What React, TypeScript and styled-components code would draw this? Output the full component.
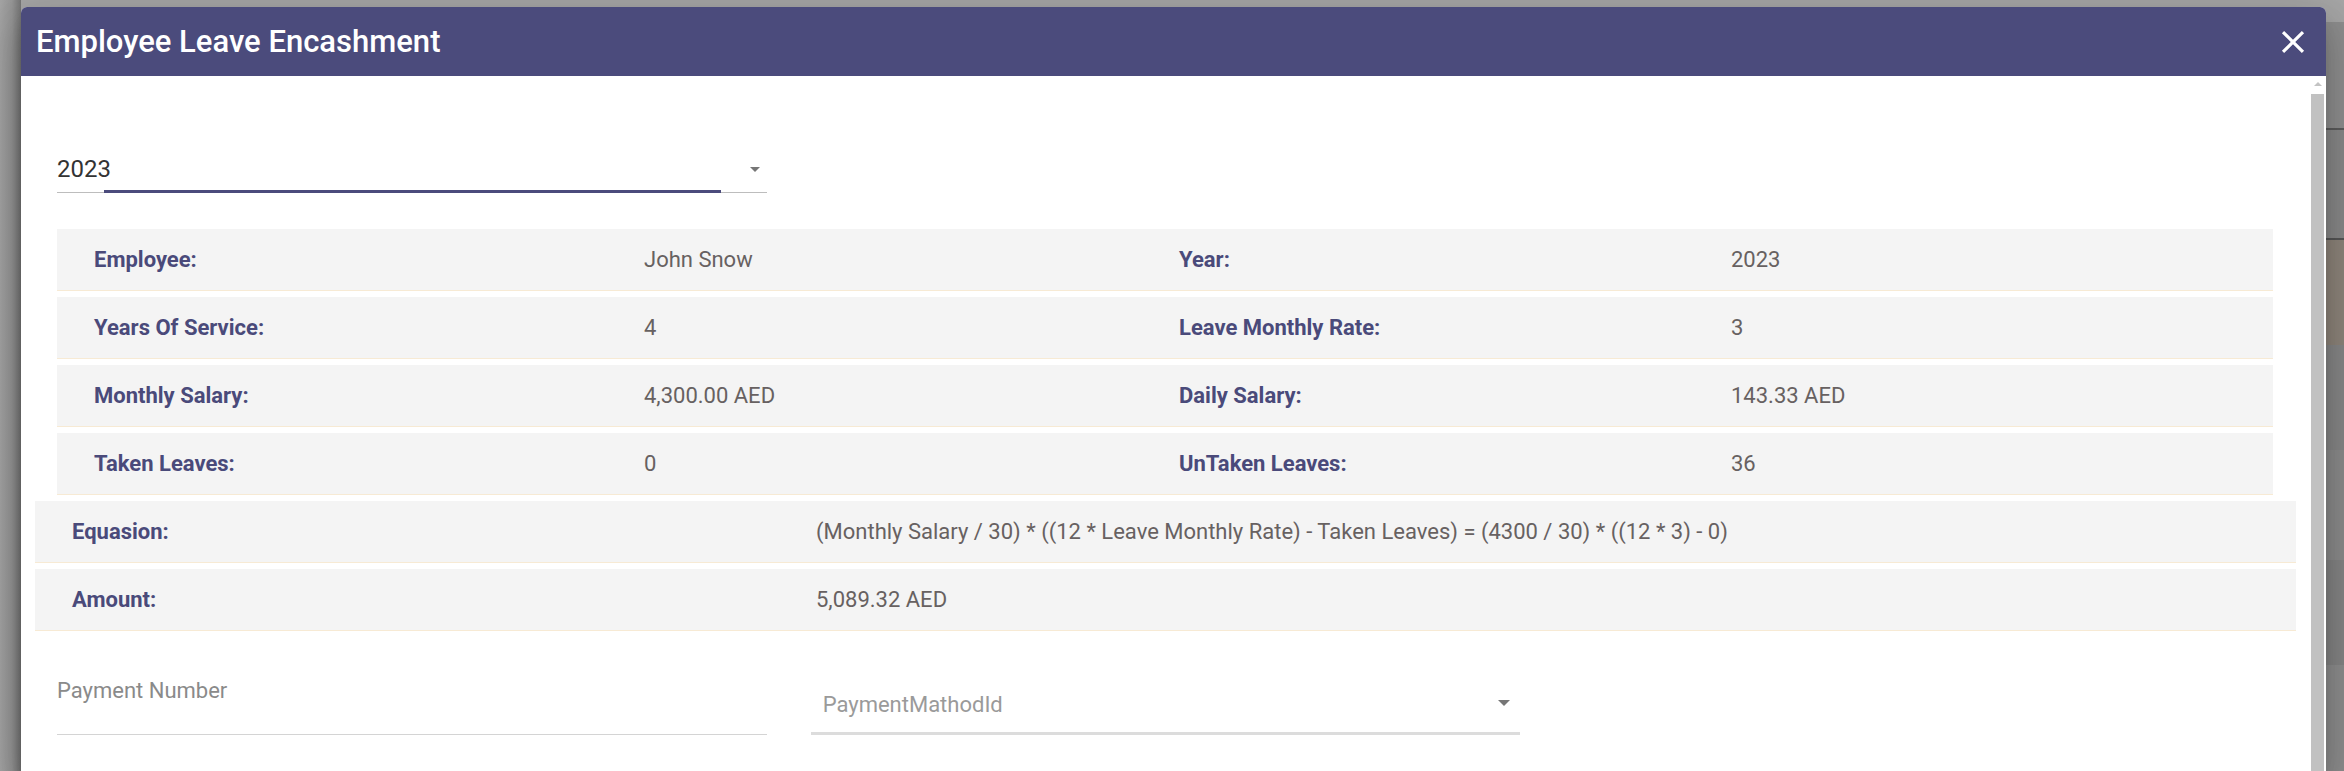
import React from "react";
import styled, { createGlobalStyle } from "styled-components";

const headerColor = "#4b4b7c";

const GlobalStyle = createGlobalStyle`
  html, body {
    margin: 0;
    padding: 0;
    height: 771px;
    overflow: hidden;
  }

  body {
    font-family: Roboto, "Liberation Sans", sans-serif;
    background:
      linear-gradient(to right, #a4a4a4 0px, #969696 12px, #767676 21px, transparent 21px),
      linear-gradient(
        to bottom,
        #a6a6a6 0px, #a6a6a6 22px,
        #8f8f8f 22px, #8f8f8f 128px,
        #5c5c5c 128px, #5c5c5c 130px,
        #898989 130px, #898989 238px,
        #565656 238px, #565656 240px,
        #8e857b 240px, #8e857b 345px,
        #878787 345px, #878787 450px,
        #8c8c8c 450px, #8c8c8c 560px,
        #858585 560px, #858585 665px,
        #8e8e8e 665px
      );
  }
`;

const Page = styled.div`
  padding: 7px 0 0 21px;
  height: 771px;
  box-sizing: border-box;
`;

const Dialog = styled.div`
  width: 2305px;
  height: 764px;
  display: flex;
  flex-direction: column;
  background: #fff;
  border-radius: 6px 6px 0 0;
  overflow: hidden;
  box-shadow: 0 11px 15px -7px rgba(0, 0, 0, 0.2), 0 24px 38px 3px rgba(0, 0, 0, 0.14),
    0 9px 46px 8px rgba(0, 0, 0, 0.12);
`;

const Header = styled.header`
  height: 69px;
  flex-shrink: 0;
  display: flex;
  align-items: center;
  justify-content: space-between;
  padding: 0 14px 0 15px;
  background: ${headerColor};
`;

const Title = styled.h2`
  margin: 0;
  font-size: 31px;
  font-weight: 500;
  color: #fff;
  letter-spacing: 0;
`;

const CloseButton = styled.button`
  border: 0;
  padding: 0;
  background: none;
  display: flex;
  cursor: pointer;
  color: #fff;
`;

const Body = styled.div`
  flex: 1;
  min-height: 0;
  display: flex;
`;

const Content = styled.div`
  flex: 1;
  padding: 0 15px 0 14px;
  overflow: hidden;
`;

const ScrollBar = styled.div`
  width: 13px;
  margin-right: 2px;
  display: flex;
  flex-direction: column;
  align-items: center;
`;

const ScrollArrow = styled.div`
  margin-top: 6px;
  height: 12px;
  display: flex;
  align-items: flex-start;
  justify-content: center;

  &::before {
    content: "";
    border-left: 4px solid transparent;
    border-right: 4px solid transparent;
    border-bottom: 4px solid #c3c3c3;
  }
`;

const ScrollThumb = styled.div`
  flex: 1;
  width: 13px;
  background: #c1c1c1;
`;

const FormRow = styled.div<{ $top: number }>`
  display: grid;
  grid-template-columns: repeat(3, 1fr);
  align-items: end;
  margin-top: ${(p) => p.$top}px;
`;

const FieldCell = styled.div`
  padding: 0 22px;
`;

const SelectBox = styled.div<{ $muted?: boolean }>`
  position: relative;
  padding: 0 0 ${(p) => (p.$muted ? 14 : 9)}px ${(p) => (p.$muted ? 12 : 0)}px;
  border-bottom: ${(p) => (p.$muted ? "3px solid #dcdcdc" : "1px solid #bdbdbd")};
  font-size: ${(p) => (p.$muted ? 22 : 24)}px;
  line-height: ${(p) => (p.$muted ? 26 : 28)}px;
  color: ${(p) => (p.$muted ? "#9a9a9a" : "#333")};
`;

const SelectArrow = styled.span<{ $right: number; $top: number; $size: number }>`
  position: absolute;
  right: ${(p) => p.$right}px;
  top: ${(p) => p.$top}px;
  border-left: ${(p) => p.$size}px solid transparent;
  border-right: ${(p) => p.$size}px solid transparent;
  border-top: ${(p) => p.$size}px solid #767676;
`;

const FocusBar = styled.span`
  position: absolute;
  left: 47px;
  right: 46px;
  bottom: -1px;
  height: 3px;
  background: ${headerColor};
`;

const TextField = styled.div`
  padding-bottom: 30px;
  border-bottom: 1px solid #d4d4d4;
`;

const FieldLabel = styled.label`
  display: block;
  font-size: 22px;
  line-height: 26px;
  color: #8a8a8a;
`;

const InfoBlock = styled.div`
  margin-top: 36px;
  padding: 0 23px 0 22px;
`;

const InfoRow = styled.div<{ $wide?: boolean }>`
  display: grid;
  grid-template-columns: ${(p) => (p.$wide ? "744px 1fr" : "550px 535px 552px 1fr")};
  align-items: center;
  height: 61px;
  padding-left: 37px;
  margin-bottom: 6px;
  background: #f4f4f4;
  border-bottom: 1px solid #f7ead4;
`;

const Label = styled.span`
  font-size: 22px;
  font-weight: 700;
  color: #4a4a7a;
`;

const Value = styled.span`
  font-size: 22px;
  color: #676161;
  white-space: nowrap;
`;

const details: [string, string, string, string][] = [
  ["Employee:", "John Snow", "Year:", "2023"],
  ["Years Of Service:", "4", "Leave Monthly Rate:", "3"],
  ["Monthly Salary:", "4,300.00 AED", "Daily Salary:", "143.33 AED"],
  ["Taken Leaves:", "0", "UnTaken Leaves:", "36"],
];

const CloseIcon = () => (
  <svg width="38" height="38" viewBox="0 0 24 24" fill="currentColor">
    <path d="M19 6.41L17.59 5 12 10.59 6.41 5 5 6.41 10.59 12 5 17.59 6.41 19 12 13.41 17.59 19 19 17.59 13.41 12z" />
  </svg>
);

export default function App() {
  return (
    <>
      <GlobalStyle />
      <Page>
        <Dialog>
          <Header>
            <Title>Employee Leave Encashment</Title>
            <CloseButton aria-label="close">
              <CloseIcon />
            </CloseButton>
          </Header>
          <Body>
            <Content>
              <FormRow $top={79}>
                <FieldCell>
                  <SelectBox>
                    2023
                    <SelectArrow $right={7} $top={12} $size={5} />
                    <FocusBar />
                  </SelectBox>
                </FieldCell>
              </FormRow>

              <InfoBlock>
                {details.map(([l1, v1, l2, v2]) => (
                  <InfoRow key={l1}>
                    <Label>{l1}</Label>
                    <Value>{v1}</Value>
                    <Label>{l2}</Label>
                    <Value>{v2}</Value>
                  </InfoRow>
                ))}
              </InfoBlock>

              <InfoRow $wide>
                <Label>Equasion:</Label>
                <Value>
                  (Monthly Salary / 30) * ((12 * Leave Monthly Rate) - Taken Leaves) = (4300 / 30) * ((12 * 3) - 0)
                </Value>
              </InfoRow>
              <InfoRow $wide>
                <Label>Amount:</Label>
                <Value>5,089.32 AED</Value>
              </InfoRow>

              <FormRow $top={47}>
                <FieldCell>
                  <TextField>
                    <FieldLabel>Payment Number</FieldLabel>
                  </TextField>
                </FieldCell>
                <FieldCell>
                  <SelectBox $muted>
                    PaymentMathodId
                    <SelectArrow $right={10} $top={8} $size={6} />
                  </SelectBox>
                </FieldCell>
              </FormRow>
            </Content>
            <ScrollBar>
              <ScrollArrow />
              <ScrollThumb />
            </ScrollBar>
          </Body>
        </Dialog>
      </Page>
    </>
  );
}
